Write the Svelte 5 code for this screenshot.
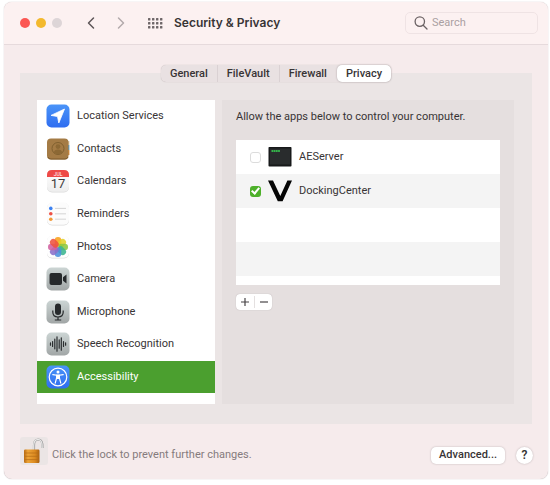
<script>
  let tabs = ['General', 'FileVault', 'Firewall', 'Privacy'];
  let services = [
    { id: 'location', name: 'Location Services' },
    { id: 'contacts', name: 'Contacts' },
    { id: 'calendars', name: 'Calendars' },
    { id: 'reminders', name: 'Reminders' },
    { id: 'photos', name: 'Photos' },
    { id: 'camera', name: 'Camera' },
    { id: 'microphone', name: 'Microphone' },
    { id: 'speech', name: 'Speech Recognition' },
    { id: 'accessibility', name: 'Accessibility' }
  ];
  let petals = ['#f9a01b', '#e3d12a', '#8cc63f', '#3bb58f', '#4c8fdb', '#8a6fc9', '#d0609f', '#ee5340'];

  let activeTab = $state('Privacy');
  let selected = $state('accessibility');
  let apps = $state([
    { id: 'aeserver', name: 'AEServer', allowed: false },
    { id: 'docking', name: 'DockingCenter', allowed: true }
  ]);
</script>

<div class="window">
  <header>
    <div class="lights">
      <button class="light red" aria-label="Close"></button>
      <button class="light yellow" aria-label="Minimize"></button>
      <button class="light" aria-label="Zoom" disabled></button>
    </div>
    <button class="nav" aria-label="Back">
      <svg width="8" height="14" viewBox="0 0 8 14"><path d="M6.5 2 L1.5 7 L6.5 12" stroke="#5d5658" /></svg>
    </button>
    <button class="nav" aria-label="Forward">
      <svg width="8" height="14" viewBox="0 0 8 14"><path d="M1.5 2 L6.5 7 L1.5 12" stroke="#b3aaac" /></svg>
    </button>
    <button class="nav all" aria-label="Show all">
      <svg width="16" height="12" viewBox="0 0 16 12">
        {#each [0, 1, 2] as row}
          {#each [0, 1, 2, 3] as col}
            <rect x={1 + col * 4} y={1 + row * 4} width="2.4" height="2.4" rx="0.5" fill="#6f6769" />
          {/each}
        {/each}
      </svg>
    </button>
    <h1>Security &amp; Privacy</h1>
    <label class="search">
      <svg width="14" height="14" viewBox="0 0 14 14">
        <circle cx="5.8" cy="5.6" r="4.7" />
        <path d="M9.2 9.2 L13 13" />
      </svg>
      <input type="text" placeholder="Search" aria-label="Search" />
    </label>
  </header>

  <main>
    <nav class="tabs">
      {#each tabs as tab}
        <button class:active={tab === activeTab} onclick={() => (activeTab = tab)}>{tab}</button>
      {/each}
    </nav>

    <div class="panel">
      <ul class="services">
        {#each services as service}
          <li>
            <button class:selected={service.id === selected} onclick={() => (selected = service.id)}>
              <svg class="icon" viewBox="0 0 24 24">
                <defs>
                  <linearGradient id="blue" x1="0" y1="0" x2="0" y2="1">
                    <stop offset="0" stop-color="#4a94f8" /><stop offset="1" stop-color="#2f6df0" />
                  </linearGradient>
                  <linearGradient id="grey" x1="0" y1="0" x2="0" y2="1">
                    <stop offset="0" stop-color="#ccd5d4" /><stop offset="1" stop-color="#a1a6a6" />
                  </linearGradient>
                  <linearGradient id="paper" x1="0" y1="0" x2="0" y2="1">
                    <stop offset="0" stop-color="#ffffff" /><stop offset="1" stop-color="#eeeeee" />
                  </linearGradient>
                </defs>
                {#if service.id === 'location'}
                  <rect x="0.5" y="0.5" width="23" height="23" rx="5" fill="url(#blue)" />
                  <path d="M18.5 5 L12.8 19 L11.5 12.5 L5 11.4 Z" fill="#fff" stroke="#fff" stroke-width="0.8" stroke-linejoin="round" />
                {:else if service.id === 'contacts'}
                  <rect x="20" y="4" width="3.4" height="4" fill="#d9c9a8" />
                  <rect x="20" y="8" width="3.4" height="5" fill="#4c9bd0" />
                  <rect x="20" y="13" width="3.4" height="5" fill="#d98b35" />
                  <rect x="1" y="1.5" width="21.5" height="21" rx="4" fill="#a47b45" />
                  <path d="M2 20 Q2.5 22 5 22 H19 Q21.5 22 22 20" fill="none" stroke="#7c5a2d" />
                  <circle cx="12" cy="11.5" r="6" fill="none" stroke="#80602f" />
                  <circle cx="12" cy="9.6" r="2.4" fill="#8c6834" />
                  <path d="M7.8 15.5 Q8.3 12.6 12 12.6 Q15.7 12.6 16.2 15.5 Q12 19 7.8 15.5 Z" fill="#8c6834" />
                {:else if service.id === 'calendars'}
                  <rect x="1" y="1" width="22" height="22.5" rx="5" fill="#dcdcdc" />
                  <rect x="1" y="1" width="22" height="21.8" rx="5" fill="url(#paper)" />
                  <path d="M1 8 V6 Q1 1 6 1 H18 Q23 1 23 6 V8 Z" fill="#ee4a47" />
                  <text x="12" y="6.6" font-size="5" text-anchor="middle" fill="#fff">JUL</text>
                  <text x="12" y="19" font-size="13" text-anchor="middle" fill="#3d3d3d">17</text>
                {:else if service.id === 'reminders'}
                  <rect x="1" y="1" width="22" height="22.5" rx="5" fill="#dcdcdc" />
                  <rect x="1" y="0.5" width="22" height="22.3" rx="5" fill="#fcfcfc" />
                  {#each ['#3c82f2', '#ee5145', '#f29a38'] as color, i}
                    <circle cx="4.8" cy={6.4 + i * 5.4} r="1.8" fill={color} />
                    <path d="M9 {6.4 + i * 5.4} H20" stroke="#cccccc" stroke-width="0.8" />
                  {/each}
                {:else if service.id === 'photos'}
                  <rect x="1" y="1" width="22" height="22.5" rx="5" fill="#dddddd" />
                  <rect x="1" y="0.5" width="22" height="22.3" rx="5" fill="#fefefe" />
                  {#each petals as color, i}
                    <rect x="8.7" y="2" width="6.6" height="9.6" rx="3.2" fill={color} fill-opacity="0.88" transform="rotate({i * 45} 12 12)" />
                  {/each}
                {:else if service.id === 'camera'}
                  <rect x="0.5" y="0.5" width="23" height="23" rx="5" fill="url(#grey)" />
                  <rect x="3.5" y="6" width="12.5" height="12" rx="2" fill="#26292b" />
                  <path d="M17 10.3 L20.5 7.4 V16.6 L17 13.7 Z" fill="#26292b" />
                {:else if service.id === 'microphone'}
                  <rect x="0.5" y="0.5" width="23" height="23" rx="5" fill="url(#grey)" />
                  <rect x="9" y="3.5" width="6" height="11.5" rx="3" fill="#26292b" />
                  <path d="M6.8 10.5 V12 Q6.8 17 12 17 Q17.2 17 17.2 12 V10.5 M12 17 V20 M8.8 20 H15.2" fill="none" stroke="#26292b" stroke-width="1.2" />
                {:else if service.id === 'speech'}
                  <rect x="0.5" y="0.5" width="23" height="23" rx="5" fill="url(#grey)" />
                  <path d="M4.5 10.8 V13.2 M6.6 9.5 V14.5 M8.8 7.2 V16.8 M11 4.8 V19.2 M13.2 7.8 V16.2 M15.3 5.8 V18.2 M17.5 9.5 V14.5 M19.6 10.8 V13.2" stroke="#2b2e30" stroke-width="1.2" stroke-linecap="round" />
                {:else}
                  <rect x="0.5" y="0.5" width="23" height="23" rx="5" fill="url(#blue)" />
                  <circle cx="12" cy="12" r="8.8" fill="none" stroke="#fff" stroke-width="1.2" />
                  <circle cx="12" cy="6.9" r="1.5" fill="#fff" />
                  <path d="M6.8 9.6 L10.6 10.2 V13 L9.2 18.2 M17.2 9.6 L13.4 10.2 V13 L14.8 18.2" fill="none" stroke="#fff" stroke-width="1.2" stroke-linecap="round" />
                  <path d="M10.2 9.6 H13.8 V14 H10.2 Z" fill="#fff" />
                {/if}
              </svg>
              {service.name}
            </button>
          </li>
        {/each}
      </ul>

      <section class="access">
        <p>Allow the apps below to control your computer.</p>
        <div class="apps">
          {#each apps as app}
            <label class="app">
              <input type="checkbox" bind:checked={app.allowed} />
              {#if app.id === 'aeserver'}
                <svg class="icon" viewBox="0 0 24 24">
                  <rect x="0.5" y="2" width="23" height="19.5" rx="0.8" fill="#17191a" />
                  <rect x="2" y="3.5" width="20" height="16" fill="#292c2d" />
                  <path d="M3.5 6 H12" stroke="#34b34a" stroke-width="1.8" stroke-dasharray="1.8 0.4" />
                </svg>
              {:else}
                <svg class="icon" viewBox="0 0 24 24">
                  <path d="M0 1.5 H5 L12.3 17 L19.4 1.5 H24 L14.6 22.3 H9.8 Z" fill="#050505" />
                </svg>
              {/if}
              {app.name}
            </label>
          {/each}
          <div class="app"></div>
          <div class="app"></div>
        </div>
        <div class="edit">
          <button aria-label="Add">
            <svg width="10" height="10" viewBox="0 0 10 10"><path d="M5 1 V9 M1 5 H9" /></svg>
          </button>
          <button aria-label="Remove">
            <svg width="10" height="10" viewBox="0 0 10 10"><path d="M1 5 H9" /></svg>
          </button>
        </div>
      </section>
    </div>
  </main>

  <footer>
    <button class="lock" aria-label="Lock">
      <svg width="28" height="28" viewBox="0 0 28 28">
        <defs>
          <linearGradient id="brass" x1="0" y1="0" x2="1" y2="0">
            <stop offset="0" stop-color="#b86c14" />
            <stop offset="0.25" stop-color="#eda437" />
            <stop offset="0.7" stop-color="#dc8a20" />
            <stop offset="1" stop-color="#a9600f" />
          </linearGradient>
        </defs>
        <path d="M14 13 V8 Q14 2.5 18.5 2.5 Q23 3 22.5 11" fill="none" stroke="#9c9c9c" stroke-width="2.2" />
        <path d="M13.7 13 V8 Q14 2.3 18.5 2.3 Q22.6 3 22.2 11" fill="none" stroke="#e8e8e8" stroke-width="1.2" />
        <rect x="4" y="12.5" width="15.5" height="13.5" rx="1.2" fill="url(#brass)" />
        <path d="M4.5 16 H19 M4.5 19.3 H19 M4.5 22.6 H19" stroke="#b56c16" stroke-width="0.7" />
      </svg>
    </button>
    <span>Click the lock to prevent further changes.</span>
    <button class="advanced">Advanced...</button>
    <button class="help" aria-label="Help">?</button>
  </footer>
</div>

<style>
  :global(body) {
    background: #fff;
  }

  .window {
    margin: 2px 2px 5px 4px;
    border-radius: 8px;
    overflow: hidden;
    background: #f6ebec;
    box-shadow: 0 0 1px #a89c9e;
    color: #383435;
    font: 11px/16px Roboto, sans-serif;
  }

  button, input {
    font: inherit;
    color: inherit;
    margin: 0;
    padding: 0;
    border: 0;
    background: none;
  }

  header {
    display: flex;
    align-items: center;
    height: 43px;
    padding: 0 10px 0 16px;
    box-sizing: border-box;
    background: #fcf1f1;
    border-bottom: 1px solid #e6dadc;
  }

  .lights {
    display: flex;
    gap: 6px;
    margin-right: 25px;
  }

  .light {
    width: 10px;
    height: 10px;
    border-radius: 50%;
    background: #ddd5d7;
  }

  .red {
    background: #fb5753;
  }

  .yellow {
    background: #f3b92e;
  }

  .nav {
    display: flex;
    margin-right: 22px;
  }

  .nav path {
    fill: none;
    stroke-width: 1.5;
    stroke-linecap: round;
    stroke-linejoin: round;
  }

  .all {
    margin-right: 11px;
  }

  h1 {
    margin: 0;
    font: 600 12px/16px Inter, sans-serif;
  }

  .search {
    display: flex;
    align-items: center;
    gap: 4px;
    width: 133px;
    height: 22px;
    margin-left: auto;
    padding: 0 8px;
    box-sizing: border-box;
    border: 1px solid #efe3e4;
    border-radius: 5px;
  }

  .search svg {
    flex: none;
    fill: none;
    stroke: #6b6264;
    stroke-width: 1.3;
    stroke-linecap: round;
  }

  .search input {
    min-width: 0;
    width: 100%;
    outline: none;
  }

  .search input::placeholder {
    color: #aaa0a2;
    opacity: 1;
  }

  main {
    padding: 20px 16px 0;
  }

  .tabs {
    position: relative;
    display: flex;
    width: max-content;
    margin: 0 auto -9px;
    background: #e9e1e2;
    border-radius: 5px;
    box-shadow: 0 0 1px #b5abad;
  }

  .tabs button {
    height: 17px;
    padding: 0 9px;
    font-weight: 500;
    border-right: 1px solid #dad1d3;
  }

  .tabs button:nth-child(3) {
    border-right-color: transparent;
  }

  .tabs .active {
    background: #fff;
    border: 0;
    border-radius: 5px;
    box-shadow: 0 0 2px #a79ea0;
  }

  .panel {
    display: grid;
    grid-template-columns: 178fr 292fr;
    gap: 7px;
    padding: 27px 18px 20px 17px;
    background: #ebe5e5;
  }

  .services {
    display: flex;
    flex-direction: column;
    height: 304px;
    margin: 0;
    padding: 0 0 11px;
    box-sizing: border-box;
    list-style: none;
    background: #fff;
  }

  .services li {
    flex: 1;
    display: flex;
  }

  .services button {
    display: flex;
    align-items: center;
    gap: 7px;
    width: 100%;
    padding: 0 9px;
    text-align: left;
  }

  .services .selected {
    background: #4b9f2f;
    color: #fff;
  }

  .icon {
    flex: none;
    width: 24px;
    height: 24px;
  }

  .access {
    padding: 9px 14px;
    background: #e5dfdf;
  }

  .access p {
    margin: 0 0 15px;
  }

  .apps {
    height: 145px;
    overflow: hidden;
    background: #fff;
  }

  .app {
    display: flex;
    align-items: center;
    gap: 7px;
    height: 34px;
    padding: 0 14px;
  }

  .app:nth-child(even) {
    background: #f4f4f4;
  }

  .app input {
    appearance: none;
    display: flex;
    width: 11px;
    height: 11px;
    border: 1px solid #dcdcdc;
    border-radius: 3px;
    box-sizing: border-box;
    background: #fff;
  }

  .app input:checked {
    border: 0;
    background: #4db02a;
  }

  .app input:checked::after {
    content: '';
    width: 3px;
    height: 6px;
    margin: 0 auto;
    border: solid #fff;
    border-width: 0 2px 2px 0;
    transform: rotate(40deg);
  }

  .edit {
    display: flex;
    width: max-content;
    margin-top: 9px;
    padding: 2px 0;
    border-radius: 4px;
    background: #fff;
    box-shadow: 0 0 1px #a79ea0;
  }

  .edit button {
    display: flex;
    align-items: center;
    justify-content: center;
    width: 18px;
    height: 12px;
  }

  .edit button + button {
    border-left: 1px solid #e4e0e0;
  }

  .edit path {
    stroke: #474345;
    stroke-width: 1.2;
  }

  footer {
    display: flex;
    align-items: center;
    padding: 13px 15px 14px 16px;
    color: #857b7d;
  }

  .lock {
    display: flex;
    margin-right: 4px;
    background: #ebe5e5;
    border-radius: 3px;
  }

  footer span {
    padding-top: 8px;
  }

  .advanced {
    height: 17px;
    margin-left: auto;
    margin-right: 11px;
    margin-top: 8px;
    padding: 0 8px;
    font-weight: 500;
    color: #383435;
    background: #fff;
    border-radius: 5px;
    box-shadow: 0 0 2px #b9aeb0;
  }

  .help {
    width: 17px;
    height: 17px;
    margin-top: 8px;
    font-size: 12px;
    font-weight: 600;
    color: #383435;
    background: #fff;
    border-radius: 50%;
    box-shadow: 0 0 2px #b9aeb0;
  }
</style>
